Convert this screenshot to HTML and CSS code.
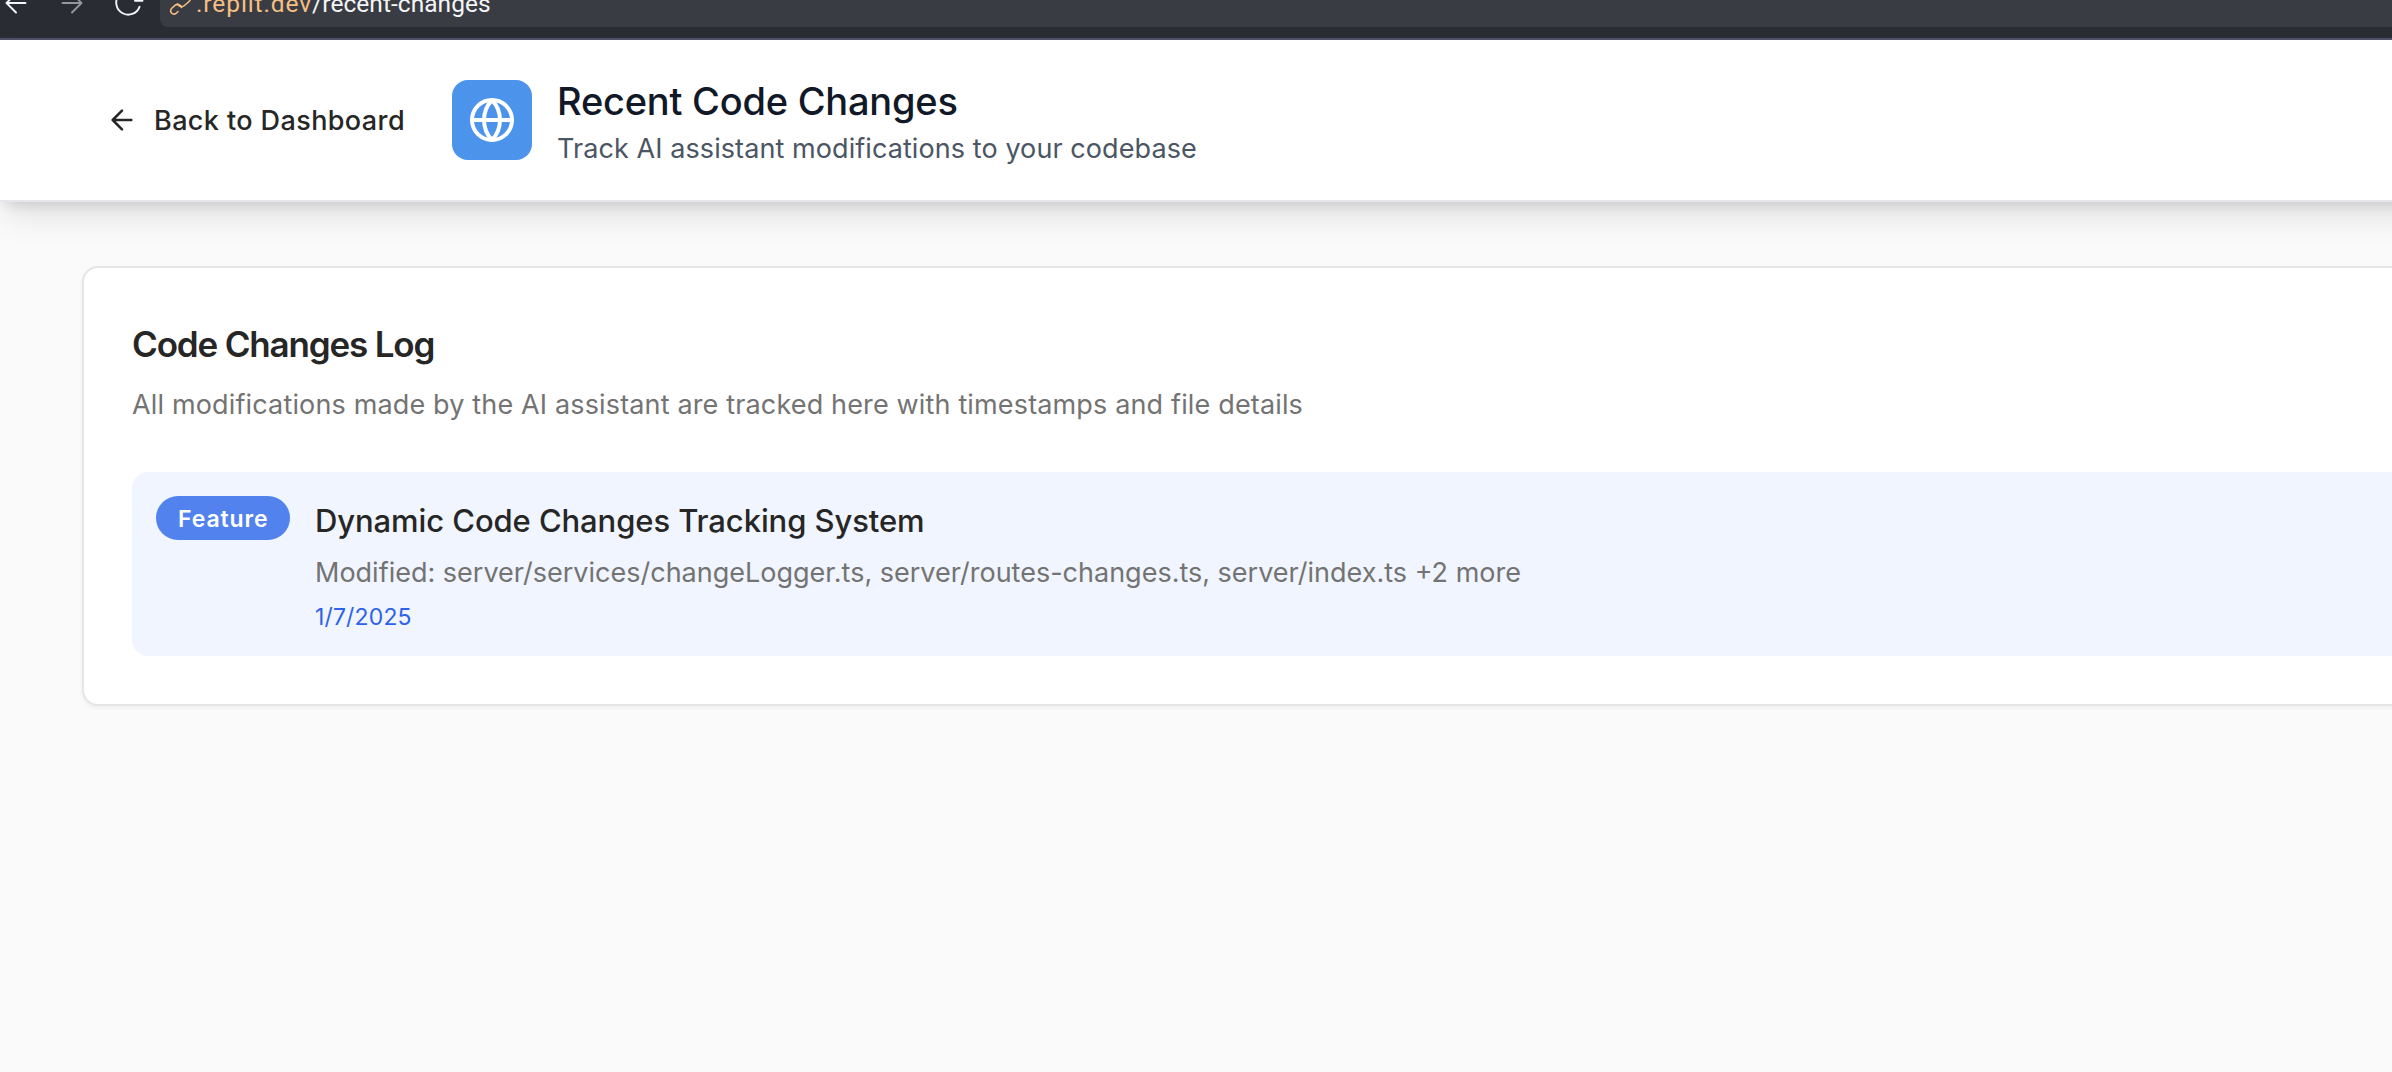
FILE: index.html
```
<!DOCTYPE html>
<html lang="en">
<head>
<meta charset="utf-8">
<title>Recent Code Changes</title>
<link rel="stylesheet" href="styles.css">
</head>
<body>
<div class="browser-bar">
  <svg class="nav-icons" width="160" height="38" viewBox="0 0 160 38" fill="none" stroke-width="1.9" stroke-linecap="round" stroke-linejoin="round">
    <path d="M25.5 3H7M16 -6.5L6.5 3L16 12.5" stroke="#f4f5f7"/>
    <path d="M62.5 3H81M72 -6.5L81.5 3L72 12.5" stroke="#96979b"/>
    <path d="M139.500 6.800A12 12 0 1 1 137.500 -5M142.500 .8H135" stroke="#f4f5f7"/>
  </svg>
  <div class="address">
    <svg class="link-icon" width="24" height="16" viewBox="0 8 24 16" fill="none" stroke="#f6bf82" stroke-width="1.6" stroke-linecap="round">
      <path d="M9.500 12a4.500 4.500 0 0 0 7 1.500l4.500-4a4.500 4.500 0 0 0-6-7"/>
      <path d="M13.500 15.500a4 4 0 0 0-6-2.500l-4 3.500a3.300 3.300 0 0 0 5 4.500l1.500-1.500"/>
    </svg>
    <span class="host">.replit.dev</span><span class="path">/recent-changes</span>
  </div>
</div>
<header class="header">
  <a class="back">
    <svg width="32" height="32" viewBox="0 0 24 24" fill="none" stroke="currentColor" stroke-width="1.9" stroke-linecap="round" stroke-linejoin="round"><path d="m12 19-7-7 7-7M19 12H5"/></svg>
    <span>Back to Dashboard</span>
  </a>
  <div class="logo">
    <svg width="48" height="48" viewBox="0 0 24 24" fill="none" stroke="currentColor" stroke-width="2" stroke-linecap="round" stroke-linejoin="round"><circle cx="12" cy="12" r="10"/><path d="M12 2a14.500 14.500 0 0 0 0 20 14.500 14.500 0 0 0 0-20M2 12h20"/></svg>
  </div>
  <div class="heading">
    <h1>Recent Code Changes</h1>
    <p>Track AI assistant modifications to your codebase</p>
  </div>
</header>
<main class="main">
  <section class="card">
    <h2>Code Changes Log</h2>
    <p class="card-note">All modifications made by the AI assistant are tracked here with timestamps and file details</p>
    <article class="entry">
      <span class="badge">Feature</span>
      <div>
        <h3>Dynamic Code Changes Tracking System</h3>
        <p class="files">Modified: server/services/changeLogger.ts, server/routes-changes.ts, server/index.ts +2 more</p>
        <p class="date">1/7/2025</p>
      </div>
    </article>
  </section>
</main>
</body>
</html>
```
FILE: styles.css
```
* { box-sizing: border-box; }
html { overflow: hidden; }
body {
  margin: 0;
  height: 1072px;
  overflow: hidden;
  background: #fafafa;
  color: #262626;
  font-family: Inter, "Liberation Sans", sans-serif;
  white-space: nowrap;
}
h1, h2, h3, p { margin: 0; }
svg { display: block; flex: none; }

.browser-bar {
  display: flex;
  align-items: flex-start;
  height: 40px;
  background: #2a2c34;
  border-bottom: 2px solid #53516a;
  overflow: hidden;
}
.address {
  display: flex;
  flex: 1;
  height: 27px;
  padding-left: 8px;
  background: #3a3c43;
  border-bottom-left-radius: 8px;
  font: 400 24.5px/8px Roboto, sans-serif;
}
.link-icon { margin-right: 4px; }
.host { color: #f6bf82; letter-spacing: .9px; }
.path { color: #f4f5f7; letter-spacing: .05px; }

.header {
  display: flex;
  align-items: center;
  position: relative;
  width: 2600px;
  height: 162px;
  padding-left: 106px;
  background: #fff;
  border-bottom: 2px solid #e5e7eb;
  box-shadow: 0 20px 30px -6px rgba(0, 0, 0, .1), 0 8px 12px -5px rgba(0, 0, 0, .12);
}
.back {
  display: flex;
  align-items: center;
  gap: 16px;
  width: 346px;
  font-size: 27px;
  font-weight: 500;
  line-height: 40px;
  letter-spacing: .4px;
}
.back span { padding-top: 2px; }
.logo {
  display: grid;
  place-items: center;
  width: 80px;
  height: 80px;
  margin-right: 25px;
  border-radius: 16px;
  background: #4b93eb;
  color: #fff;
}
.heading h1 {
  color: #111827;
  font-size: 38px;
  font-weight: 500;
  line-height: 58px;
  letter-spacing: -.22px;
}
.heading p {
  color: #4b5563;
  font-size: 27px;
  line-height: 38px;
  letter-spacing: .08px;
}

.main { padding: 64px 0 0 82px; }
.card {
  width: 2500px;
  padding: 48px;
  background: #fff;
  border: 2px solid #e5e5e5;
  border-radius: 16px;
  box-shadow: 0 2px 4px rgba(0, 0, 0, .05);
}
.card h2 {
  font-size: 35px;
  font-weight: 600;
  line-height: 56px;
  letter-spacing: -1.16px;
}
.card-note {
  margin-top: 13px;
  color: #737373;
  font-size: 27px;
  line-height: 40px;
  letter-spacing: .15px;
}
.entry {
  display: flex;
  align-items: flex-start;
  gap: 25px;
  margin-top: 47px;
  padding: 24px;
  border-radius: 16px;
  background: #f0f5ff;
}
.badge {
  width: 134px;
  height: 44px;
  padding-left: 22px;
  border-radius: 22px;
  background: #5182ee;
  color: #fff;
  font-size: 23px;
  font-weight: 600;
  line-height: 46px;
  letter-spacing: .9px;
}
.entry h3 {
  font-size: 31px;
  font-weight: 500;
  line-height: 49px;
  letter-spacing: -.09px;
}
.files {
  margin-top: 8px;
  color: #737373;
  font-size: 27px;
  line-height: 40px;
}
.date {
  margin-top: 8px;
  color: #2f62ea;
  font-size: 23px;
  line-height: 32px;
  margin-bottom: -1px;
  letter-spacing: .15px;
}
```
